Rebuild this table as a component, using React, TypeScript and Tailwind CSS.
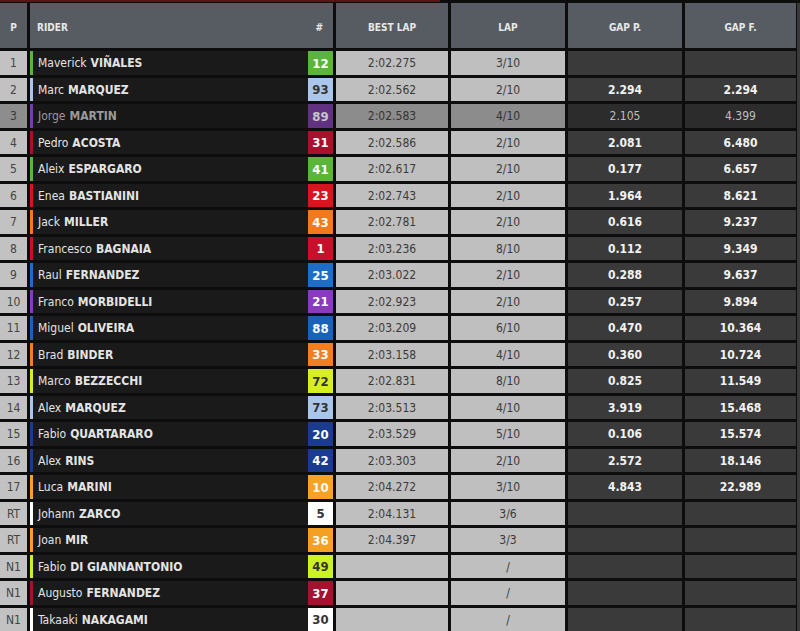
import React from 'react';

type Row = {
  pos: string;
  first: string;
  last: string;
  num: string;
  color: string;
  dark?: boolean;
  best: string;
  lap: string;
  gapP: string;
  gapF: string;
  dim?: boolean;
};

const rows: Row[] = [
  { pos: '1', first: 'Maverick', last: 'VIÑALES', num: '12', color: '#5bb53a', best: '2:02.275', lap: '3/10', gapP: '', gapF: '' },
  { pos: '2', first: 'Marc', last: 'MARQUEZ', num: '93', color: '#aac6ea', dark: true, best: '2:02.562', lap: '2/10', gapP: '2.294', gapF: '2.294' },
  { pos: '3', first: 'Jorge', last: 'MARTIN', num: '89', color: '#7a3ca6', best: '2:02.583', lap: '4/10', gapP: '2.105', gapF: '4.399', dim: true },
  { pos: '4', first: 'Pedro', last: 'ACOSTA', num: '31', color: '#a8102c', best: '2:02.586', lap: '2/10', gapP: '2.081', gapF: '6.480' },
  { pos: '5', first: 'Aleix', last: 'ESPARGARO', num: '41', color: '#5bb53a', best: '2:02.617', lap: '2/10', gapP: '0.177', gapF: '6.657' },
  { pos: '6', first: 'Enea', last: 'BASTIANINI', num: '23', color: '#d8141e', best: '2:02.743', lap: '2/10', gapP: '1.964', gapF: '8.621' },
  { pos: '7', first: 'Jack', last: 'MILLER', num: '43', color: '#f27a1c', best: '2:02.781', lap: '2/10', gapP: '0.616', gapF: '9.237' },
  { pos: '8', first: 'Francesco', last: 'BAGNAIA', num: '1', color: '#c8102a', best: '2:03.236', lap: '8/10', gapP: '0.112', gapF: '9.349' },
  { pos: '9', first: 'Raul', last: 'FERNANDEZ', num: '25', color: '#1e6ec8', best: '2:03.022', lap: '2/10', gapP: '0.288', gapF: '9.637' },
  { pos: '10', first: 'Franco', last: 'MORBIDELLI', num: '21', color: '#8a3abc', best: '2:02.923', lap: '2/10', gapP: '0.257', gapF: '9.894' },
  { pos: '11', first: 'Miguel', last: 'OLIVEIRA', num: '88', color: '#1a62b8', best: '2:03.209', lap: '6/10', gapP: '0.470', gapF: '10.364' },
  { pos: '12', first: 'Brad', last: 'BINDER', num: '33', color: '#f07e22', best: '2:03.158', lap: '4/10', gapP: '0.360', gapF: '10.724' },
  { pos: '13', first: 'Marco', last: 'BEZZECCHI', num: '72', color: '#d6ee22', dark: true, best: '2:02.831', lap: '8/10', gapP: '0.825', gapF: '11.549' },
  { pos: '14', first: 'Alex', last: 'MARQUEZ', num: '73', color: '#aac6ea', dark: true, best: '2:03.513', lap: '4/10', gapP: '3.919', gapF: '15.468' },
  { pos: '15', first: 'Fabio', last: 'QUARTARARO', num: '20', color: '#1b3c8e', best: '2:03.529', lap: '5/10', gapP: '0.106', gapF: '15.574' },
  { pos: '16', first: 'Alex', last: 'RINS', num: '42', color: '#1b3c8e', best: '2:03.303', lap: '2/10', gapP: '2.572', gapF: '18.146' },
  { pos: '17', first: 'Luca', last: 'MARINI', num: '10', color: '#f6a325', best: '2:04.272', lap: '3/10', gapP: '4.843', gapF: '22.989' },
  { pos: 'RT', first: 'Johann', last: 'ZARCO', num: '5', color: '#ffffff', dark: true, best: '2:04.131', lap: '3/6', gapP: '', gapF: '' },
  { pos: 'RT', first: 'Joan', last: 'MIR', num: '36', color: '#f4a022', best: '2:04.397', lap: '3/3', gapP: '', gapF: '' },
  { pos: 'N1', first: 'Fabio', last: 'DI GIANNANTONIO', num: '49', color: '#cdf224', dark: true, best: '', lap: '/', gapP: '', gapF: '' },
  { pos: 'N1', first: 'Augusto', last: 'FERNANDEZ', num: '37', color: '#a3122e', best: '', lap: '/', gapP: '', gapF: '' },
  { pos: 'N1', first: 'Takaaki', last: 'NAKAGAMI', num: '30', color: '#ffffff', dark: true, best: '', lap: '/', gapP: '', gapF: '' },
];

const font = { fontFamily: '"DejaVu Sans Condensed", "Liberation Sans Narrow", Roboto, sans-serif' };

const HeaderCell = ({ children, className = '' }: { children?: React.ReactNode; className?: string }) => (
  <div className={`bg-[#575c63] text-[#e8e8e8] text-[10px] font-bold flex items-center pt-[3px] ${className}`}>{children}</div>
);

const App = () => {
  return (
    <div className="w-[800px] h-[631px] bg-[#0d0d0d] overflow-hidden" style={font}>
      <div className="h-[3px] flex">
        <div className="w-[440px] h-[2px] bg-[#5e1414]" />
      </div>
      <div className="flex">
        <div className="grid grid-cols-[27px_303px_112px_114px_114px_111px] grid-rows-[45px] auto-rows-[23.5px] gap-x-[3px] gap-y-[3px]">
          <HeaderCell className="justify-center">P</HeaderCell>
          <HeaderCell className="justify-between pl-[7px] pr-[10px]">
            <span>RIDER</span>
            <span>#</span>
          </HeaderCell>
          <HeaderCell className="justify-center">BEST LAP</HeaderCell>
          <HeaderCell className="justify-center">LAP</HeaderCell>
          <HeaderCell className="justify-center">GAP P.</HeaderCell>
          <HeaderCell className="justify-center">GAP F.</HeaderCell>

          {rows.map((r, i) => (
            <React.Fragment key={i}>
              <div className={`flex items-center justify-center text-[12px] pt-[1px] ${r.dim ? 'bg-[#8d8d8d] text-[#3a3a3a]' : 'bg-[#c2c2c2] text-[#444]'}`}>
                {r.pos}
              </div>
              <div className={`flex items-stretch ${r.dim ? 'bg-[#171717]' : 'bg-[#1a1a1a]'}`}>
                <div className="w-[3px]" style={{ backgroundColor: r.color }} />
                <div className={`flex-1 flex items-center pl-[5px] pt-[1px] text-[12px] ${r.dim ? 'text-[#9a9a9a]' : 'text-[#e4e4e4]'}`}>
                  <span>{r.first}</span>
                  <span className="font-bold ml-[4px]">{r.last}</span>
                </div>
                <div
                  className={`w-[25px] flex items-center justify-center pt-[1px] text-[13px] font-bold ${r.dark ? 'text-[#333]' : 'text-white'} ${r.dim ? 'opacity-75' : ''}`}
                  style={{ backgroundColor: r.color }}
                >
                  {r.num}
                </div>
              </div>
              <div className={`flex items-center justify-center pt-[1px] text-[12px] ${r.dim ? 'bg-[#8c8c8c] text-[#333]' : 'bg-[#bfbfbf] text-[#3a3a3a]'}`}>
                {r.best}
              </div>
              <div className={`flex items-center justify-center pt-[1px] text-[12px] ${r.dim ? 'bg-[#8c8c8c] text-[#333]' : 'bg-[#bfbfbf] text-[#3a3a3a]'}`}>
                {r.lap}
              </div>
              <div className={`flex items-center justify-center pt-[1px] text-[12px] ${r.dim ? 'bg-[#2c2c2c] text-[#bdbdbd]' : 'bg-[#3a3a3a] text-[#f2f2f2] font-bold'}`}>
                {r.gapP}
              </div>
              <div className={`flex items-center justify-center pt-[1px] text-[12px] ${r.dim ? 'bg-[#2c2c2c] text-[#bdbdbd]' : 'bg-[#3a3a3a] text-[#f2f2f2] font-bold'}`}>
                {r.gapF}
              </div>
            </React.Fragment>
          ))}
        </div>
        <div className="flex-1 bg-[#3a3a3a] ml-[1px]" />
      </div>
    </div>
  );
};

export default App;
